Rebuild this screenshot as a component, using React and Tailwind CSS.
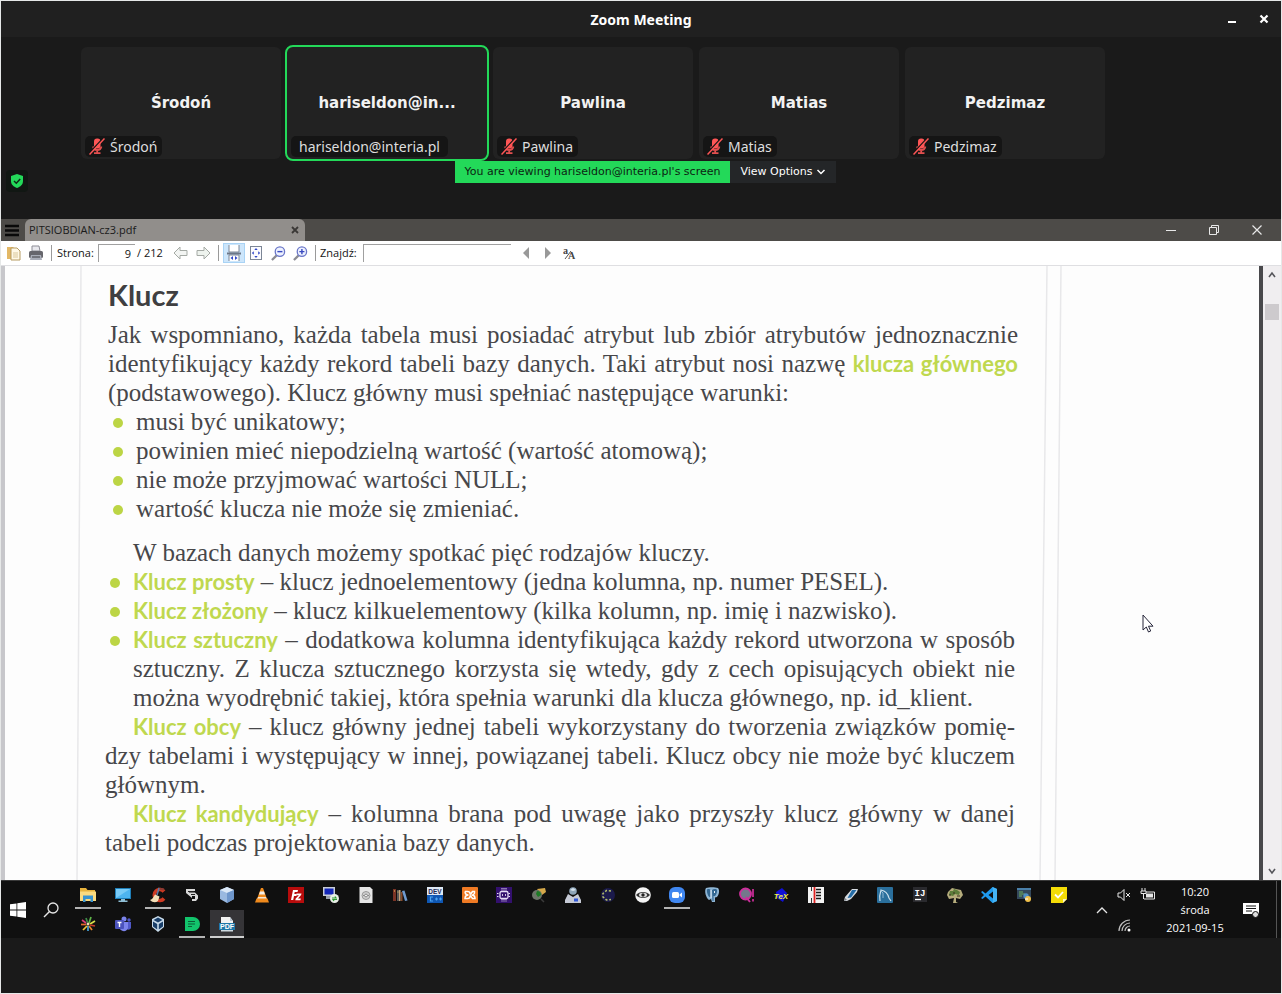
import React from "react";

const participants = [
  { name: "Środoń", label: "Środoń", muted: true },
  { name: "hariseldon@in...", label: "hariseldon@interia.pl", active: true },
  { name: "Pawlina", label: "Pawlina", muted: true },
  { name: "Matias", label: "Matias", muted: true },
  { name: "Pedzimaz", label: "Pedzimaz", muted: true },
];

function MutedMic() {
  return (
    <svg width="16" height="17" viewBox="0 0 16 17" className="shrink-0">
      <rect x="5" y="0.500" width="6.500" height="10" rx="3" fill="#ff5656" />
      <path d="M4 8.500c.5 2.500 2 3.500 4.200 3.500s3.700-1 4.200-3.500M8.200 11v4M5 15.200h6.500" stroke="#e24f4f" strokeWidth="1.800" fill="none" />
      <path d="M0 15.500L14.500 0" stroke="#151515" strokeWidth="1.600" />
      <path d="M0.500 16.500L15.500 0.500" stroke="#ff5656" strokeWidth="1.500" />
    </svg>
  );
}

function Tile({ p }) {
  return (
    <div
      className={
        "relative flex h-28 w-[200px] items-center justify-center rounded-md bg-[#222222] " +
        (p.active ? "outline-2 outline-[#23d959]" : "")
      }
    >
      <span className="text-[15px] font-bold text-[#f2f2f2]">{p.name}</span>
      <div className="absolute bottom-0.5 left-1 flex h-[21px] items-center gap-1 rounded-[5px] bg-[#151515] px-1">
        {p.muted && <MutedMic />}
        <span className={"font-['Noto_Sans',sans-serif] text-[14px] leading-5 text-[#dedede] " + (p.active ? "px-1" : "px-px")}>{p.label}</span>
      </div>
    </div>
  );
}

function Svg({ children, size = 16 }) {
  return (
    <svg width={size} height={size} viewBox="0 0 16 16">
      {children}
    </svg>
  );
}

const icons = {
  Explorer: (
    <Svg>
      <path d="M0 1h6l1.500 2H15v11H0z" fill="#e8b33c" />
      <path d="M0 4.500h16V14H0z" fill="#fbdb80" />
      <path d="M3 15V8.500h10V15h-2.500v-3h-5v3z" fill="#3a94cf" />
    </Svg>
  ),
  Computer: (
    <Svg>
      <rect x="0" y="1" width="16" height="11" fill="#1f7fb8" />
      <rect x="1" y="2" width="14" height="9" fill="#4db4f0" />
      <path d="M1 11V2h14z" fill="#79cbf7" />
      <path d="M6 12h4v1.500h2.500V15h-9v-1.500H6z" fill="#8fbfd6" />
    </Svg>
  ),
  CCleaner: (
    <Svg>
      <path d="M14 4.500A5.500 5.500 0 1 0 14 11.500" stroke="#cf3a22" strokeWidth="3.600" fill="none" />
      <path d="M8 1.500l6 1" stroke="#8c3a33" strokeWidth="2" />
      <path d="M9 1L7 8" stroke="#5a7ca8" strokeWidth="1.500" />
      <path d="M5 7.500l4.500 2L8 14c-2.500 2-5.500 1.500-8-1 2.500-.8 3.500-3 5-5.500z" fill="#f4e0b8" />
    </Svg>
  ),
  Terminal: (
    <Svg>
      <path d="M2 2h9v2H5v1.500h6l3 3v3l-2 2.500H8v-2h3V9H8v2L2 6z" fill="#d8d8d8" />
      <path d="M4 4.500h6M7 7.500h4" stroke="#222" strokeWidth="1" />
    </Svg>
  ),
  VirtualDisk: (
    <Svg>
      <path d="M8 0l7 3v9l-7 4-7-4V3z" fill="#9ab9e0" />
      <path d="M8 0l7 3-7 3-7-3z" fill="#dbe8f7" />
      <path d="M8 6l7-3v9l-7 4z" fill="#6f97cc" />
    </Svg>
  ),
  VLC: (
    <Svg>
      <path d="M7 1h2l4 11H3z" fill="#f08a1c" />
      <path d="M6 4.500h4l1 3H5z" fill="#f4f0ea" />
      <path d="M4 10h8l.7 2H3.300z" fill="#f4e6d6" />
      <path d="M2.500 11.500h11L15 15.500H1z" fill="#f08a1c" />
    </Svg>
  ),
  FileZilla: (
    <Svg>
      <rect width="16" height="16" fill="#b80c0c" />
      <path d="M3 13L5 3h5l-.5 2H6.700l-.4 2h2.500l-.4 2H6l-.8 4z" fill="#fff" />
      <path d="M8.500 6.500h5l-.4 1.600L10 11.400h2.800l-.4 1.800H7.300l.4-1.700 3.200-3.300H8.200z" fill="#fff" />
    </Svg>
  ),
  Putty: (
    <Svg>
      <rect x="0" y="0" width="12" height="9" fill="#c8cdd6" />
      <rect x="1.500" y="1.500" width="9" height="6" fill="#1326b9" />
      <path d="M3 9h7v3H3z" fill="#9aa1ad" />
      <circle cx="11.500" cy="11.500" r="4.500" fill="#e8efe6" />
      <path d="M9 11h4l-1-1.500M14 12.500h-4l1 1.500" stroke="#2c9a31" strokeWidth="1.200" fill="none" />
    </Svg>
  ),
  Disc: (
    <Svg>
      <path d="M1.500 0H12l2.500 2.500V16h-13z" fill="#e6e6e6" />
      <circle cx="8" cy="8.500" r="4" fill="#d0d0d0" stroke="#999" />
      <path d="M5 8.500h6" stroke="#888" />
      <circle cx="8" cy="8.500" r="1.400" fill="#fff" stroke="#888" />
    </Svg>
  ),
  Library: (
    <Svg>
      <path d="M1 2h3v12H1z" fill="#7a3325" />
      <path d="M5 3h2v11H5z" fill="#5b5a58" />
      <path d="M7 3h1.500v11H7z" fill="#c8a37c" />
      <path d="M9 5h1.500v9H9z" fill="#8a4a2a" />
      <path d="M10 4l2.500-.500 3 10-2.500.5z" fill="#6f9ace" />
      <path d="M2 4h1M5.500 5h1" stroke="#e6c860" />
    </Svg>
  ),
  DevCpp: (
    <Svg>
      <rect width="16" height="8" fill="#dfe9f5" />
      <rect y="8" width="16" height="8" fill="#0f57b3" />
      <text x="8" y="6.500" textAnchor="middle" fontSize="6.500" fontWeight="700" fontFamily="Liberation Sans, sans-serif" fill="#1b2a55">DEV</text>
      <path d="M6 10H3.500v4H6M8 12h3M9.500 10.500v3M12 12h3M13.500 10.500v3" stroke="#4ba4f0" strokeWidth="1.200" fill="none" />
    </Svg>
  ),
  Xampp: (
    <Svg>
      <rect width="16" height="16" rx="1" fill="#ef7a24" />
      <path d="M3 4.500h2.500Q8 4.500 8 6.500T10.500 4.500H12.500Q13 8 9.500 8M3 4.500Q3 8 6.500 8Q3 8 3 11.500H5.500Q8 11.500 8 9.500T10.500 11.500H13Q13 8 9.500 8" stroke="#fff" strokeWidth="1.500" fill="none" />
    </Svg>
  ),
  Chip: (
    <Svg>
      <rect width="16" height="16" fill="#33106e" />
      <rect x="4" y="4.500" width="8" height="7" rx="1.500" fill="none" stroke="#e6dcf7" strokeWidth="1.300" />
      <path d="M6 1v3M8 1v3M10 1v3M6 12v3M8 12v3M10 12v3M1 6.500h2.500M1 9.500h2.500M12.500 6.500H15M12.500 9.500H15" stroke="#e6dcf7" strokeDasharray="1.500 1" />
      <path d="M6 8h1M9 8h1" stroke="#fff" strokeWidth="1.600" />
    </Svg>
  ),
  Magnifier: (
    <Svg>
      <path d="M6 2l8-1 1 4-4 3z" fill="#d6a94a" />
      <circle cx="6" cy="8" r="5" fill="#6c7468" />
      <path d="M6 4a4 4 0 0 1 4 4l-3 2-2-3z" fill="#1d7a25" />
      <path d="M10 12l3 3" stroke="#3b3b3b" strokeWidth="1.500" />
    </Svg>
  ),
  Drive: (
    <Svg>
      <circle cx="8" cy="4" r="3.800" fill="#8ea5b8" />
      <path d="M3 7l5 3 5-3 3 6v3H0v-3z" fill="#c6cad6" />
      <rect x="9" y="11.500" width="4" height="3" fill="#3158d8" />
      <path d="M5 3l3-2 3 2-3 1z" fill="#d5e2ec" />
    </Svg>
  ),
  Eclipse: (
    <Svg>
      <circle cx="8" cy="8" r="7" fill="#1b1a4b" />
      <path d="M11 4L6.500 3.500 3 6.500v3.500l3.500 3 4.500-.5" stroke="#b4c06c" strokeWidth="1.600" strokeDasharray="2.200 1.800" fill="none" />
    </Svg>
  ),
  Eye: (
    <Svg>
      <circle cx="8" cy="8" r="7.800" fill="#f5f5f5" />
      <path d="M1 8c3-4 11-4 14 0-3 4-11 4-14 0z" fill="#333" />
      <ellipse cx="8" cy="8" rx="4" ry="2.200" fill="#ddd" />
      <circle cx="8" cy="8" r="1.700" fill="#222" />
    </Svg>
  ),
  Zoom: (
    <Svg>
      <rect width="16" height="16" rx="6" fill="#4087f0" />
      <rect x="3" y="5" width="7" height="6" rx="1.500" fill="#fff" />
      <path d="M10.500 7.500L13 5.500v5l-2.500-2z" fill="#fff" />
    </Svg>
  ),
  Postgres: (
    <Svg>
      <path d="M2 1c3-1 9-1 12 0 2 2 1 7-1 9l-2 .500V15H8l-1-3-2 1C2 11 0 4 2 1z" fill="#8eb5d4" />
      <path d="M3 2.500c1.500-.7 3-.5 3.500.5v7.500C4 10 2.500 5 3 2.500zM8 3c2-1.500 4.500-1 5 0 .5 2-1 5-2 6H9.500V14H8.500z" fill="#336791" />
      <path d="M7 3v8M10.500 4v2" stroke="#e8f1f8" />
    </Svg>
  ),
  Quiz: (
    <Svg>
      <circle cx="6.500" cy="7" r="5.500" fill="#74788c" stroke="#ce2e9c" strokeWidth="1.800" />
      <path d="M7 10l4 5" stroke="#ce2e9c" strokeWidth="2" />
      <path d="M14 2v8M14 12v2.500" stroke="#ce2e9c" strokeWidth="1.700" />
    </Svg>
  ),
  TeX: (
    <Svg>
      <path d="M3 5l6-4 5 5-4 9-6-4z" fill="#1010d8" />
      <text x="8" y="11.500" textAnchor="middle" fontSize="8" fontWeight="700" fontStyle="italic" fontFamily="Liberation Sans, sans-serif" fill="#f3ef4a">TeX</text>
    </Svg>
  ),
  Piano: (
    <Svg>
      <rect width="16" height="16" fill="#f3f3f3" />
      <path d="M3.500 0v4M3.500 11v5" stroke="#333" />
      <path d="M6.500 0v16" stroke="#e02222" strokeWidth="1.800" />
      <path d="M8 2.500h5M8 5.500h5M8 8.500h5M8 11.500h5" stroke="#1b1b1b" strokeWidth="1.600" />
    </Svg>
  ),
  Usb: (
    <Svg>
      <path d="M9 2h6l-1 3-6 7-4 2H1l1-4z" fill="#d8dde2" />
      <path d="M9 3h4.500L8 10.500 4.500 11z" fill="#256ca6" />
      <path d="M1 14l3-1-2-2z" fill="#7c8288" />
    </Svg>
  ),
  MySQL: (
    <Svg>
      <rect width="16" height="16" rx="1" fill="#2a6f9c" />
      <path d="M3 14c-1-5 0-8 1-11 5 1 7 4 8 8l2 3" stroke="#c9dfec" strokeWidth="1.200" fill="none" />
      <path d="M3 3l3 3v5" stroke="#8fb9d3" fill="none" />
    </Svg>
  ),
  IntelliJ: (
    <Svg>
      <rect x="1" width="14" height="15" fill="#2a2a2e" />
      <text x="8" y="9" textAnchor="middle" fontSize="9" fontWeight="700" fontFamily="Liberation Mono, monospace" fill="#fff">IJ</text>
      <path d="M3 12.500h6" stroke="#fff" strokeWidth="1.300" />
    </Svg>
  ),
  Tree: (
    <Svg>
      <path d="M1 5l4-4 4 1 5 1 2 5-3 4-4-1v4l2 1H6l1-5-5 1-2-4z" fill="#b5ac7c" />
      <path d="M3 4h3l1-2 3 1 3 2-1 3-4-1-2 2-4-1z" fill="#5d7d3b" />
      <path d="M2 8h2M10 9h3M6 6h2" stroke="#3a2f20" />
    </Svg>
  ),
  VSCode: (
    <Svg>
      <path d="M11.500 0L16 2v12l-4.500 2L4.500 9.500 1.500 12 0 11l3-3-3-3 1.500-1L4.500 6.500zM12 4.500L7.500 8l4.500 3.500z" fill="#1f9cf0" />
      <path d="M11.500 0L16 2v12l-4.500 2 .5-3V3z" fill="#45b4f5" />
    </Svg>
  ),
  PythonIde: (
    <Svg>
      <rect x="1" y="1" width="14" height="11" fill="#33485c" />
      <rect x="1" y="1" width="14" height="2" fill="#4a7fa8" />
      <path d="M3 5h4M3 7h6M3 9h3" stroke="#6fae5e" />
      <circle cx="10" cy="9" r="2.700" fill="#4f8fc4" />
      <circle cx="12" cy="12" r="3" fill="#f2c14a" />
      <path d="M9 12h3" stroke="#fff" />
    </Svg>
  ),
  Tasks: (
    <Svg>
      <path d="M0 0h16v12l-4 4H0z" fill="#f4dc06" />
      <path d="M16 12l-4 4v-4z" fill="#fff8c0" />
      <path d="M4 7.500l3 3 5-5.500" stroke="#fff" strokeWidth="1.800" fill="none" />
    </Svg>
  ),
  Burst: (
    <Svg>
      <g strokeWidth="1.700" fill="none">
        <path d="M9 7l2-6" stroke="#5fb548" />
        <path d="M10 8l5-3" stroke="#d8e04a" />
        <path d="M10 9l5 1" stroke="#c23a2c" />
        <path d="M9 10l3 4" stroke="#e6872a" />
        <path d="M8 10v5" stroke="#46a3d8" />
        <path d="M7 10l-4 4" stroke="#f0c43a" />
        <path d="M6 8.500H1" stroke="#e66a2a" />
        <path d="M6 7L2 4" stroke="#d83c78" />
        <path d="M7.500 6.500L6 2" stroke="#3d8a49" />
      </g>
      <circle cx="8" cy="8" r="1.500" fill="#f4d9b0" />
    </Svg>
  ),
  Teams: (
    <Svg>
      <circle cx="9" cy="3" r="2.500" fill="#7b83eb" />
      <circle cx="14" cy="4" r="1.700" fill="#5059c9" />
      <path d="M11 6h5v6c-1 2-3 2-4 1z" fill="#5059c9" />
      <path d="M5 6h8v6c-1 4-6 4-8 1z" fill="#7b83eb" />
      <rect x="0" y="4" width="9" height="9" rx="1" fill="#4b53bc" />
      <path d="M2.500 6.500h4M4.500 6.500v4.500" stroke="#fff" strokeWidth="1.400" />
    </Svg>
  ),
  VirtualBox: (
    <Svg>
      <path d="M8 0l6 3v8l-6 5-6-5V3z" fill="#c8dcec" />
      <path d="M8 1.500L12.500 4 8 6.500 3.500 4zM3 5.500L7.200 8v5.500L3 10.500zM13 5.500L8.800 8v5.500l4.200-3z" fill="#183e69" />
    </Svg>
  ),
  Notes: (
    <Svg>
      <path d="M1 1h8a7 7 0 0 1 0 14H1z" fill="#12c46c" />
      <path d="M4 5.500h7M4 8h7M4 10.500h4" stroke="#0b5c36" strokeWidth="1.200" />
    </Svg>
  ),
  Pdf: (
    <Svg>
      <path d="M2 1h9l3 4v4H2z" fill="#f2f2f2" />
      <path d="M11 1v4h3z" fill="#b9c3cc" />
      <rect x="0" y="7" width="16" height="7" fill="#1e77a8" />
      <text x="8" y="13" textAnchor="middle" fontSize="7" fontWeight="700" fontFamily="Liberation Sans, sans-serif" fill="#fff">PDF</text>
      <path d="M2 14h12v1.500H2z" fill="#cfd9df" />
    </Svg>
  ),
};

const taskRow1 = [
  "Explorer", "Computer", "CCleaner", "Terminal", "VirtualDisk", "VLC", "FileZilla", "Putty", "Disc", "Library",
  "DevCpp", "Xampp", "Chip", "Magnifier", "Drive", "Eclipse", "Eye", "Zoom", "Postgres", "Quiz",
  "TeX", "Piano", "Usb", "MySQL", "IntelliJ", "Tree", "VSCode", "PythonIde", "Tasks",
];
const taskRow2 = ["Burst", "Teams", "VirtualBox", "Notes", "Pdf"];
const running = ["Explorer", "CCleaner", "Zoom", "Notes"];

function TaskButton({ name }) {
  const current = name === "Pdf";
  return (
    <button
      type="button"
      aria-label={name}
      className={
        "flex h-7 flex-col items-center justify-between pt-[6px] " +
        (current ? "border-b-2 border-[#cfcfcf] bg-[#353437]" : "")
      }
    >
      {icons[name]}
      {running.includes(name) && <span className="h-0.5 w-[26px] bg-[#b4b4b4]" />}
    </button>
  );
}

function Separator() {
  return <span className="h-4 w-px bg-[#9a9a9a]" />;
}

function ToolButton({ label, active, children }) {
  return (
    <button
      type="button"
      aria-label={label}
      className={"flex h-5 w-[22px] items-center justify-center " + (active ? "border border-[#a9d3f5] bg-[#cde6fb]" : "")}
    >
      {children}
    </button>
  );
}

function ZoomGlyph({ plus }) {
  return (
    <Svg size={15}>
      <path d="M6 10L1 15" stroke="#8b8b93" strokeWidth="2.400" />
      <circle cx="9.500" cy="6" r="5" fill="#eef2ff" stroke="#6a76c8" strokeWidth="1.400" />
      <path d={plus ? "M6.800 6h5.400M9.500 3.300v5.400" : "M6.800 6h5.400"} stroke="#3949c0" strokeWidth="1.500" />
    </Svg>
  );
}

function Term({ children }) {
  return <strong className="font-[Lato,sans-serif] text-[22px] font-bold text-[#bfd84f]">{children}</strong>;
}

/* One printed line; full lines stretch to both margins. */
function Line({ full, indent, children }) {
  return (
    <span
      className={
        "block whitespace-nowrap " + (full ? "[text-align-last:justify] " : "") + (indent ? "pl-7" : "")
      }
    >
      {children}
    </span>
  );
}

function Bullet({ children }) {
  return (
    <li className="flex">
      <span className="flex h-[29px] w-7 shrink-0 items-center pt-0.5 pl-[5px]">
        <span className="size-2.5 rounded-full bg-[#bcd545]" />
      </span>
      <div className="grow">{children}</div>
    </li>
  );
}

function MeetingHeader() {
  return (
    <header className="grid h-9 grid-cols-[1fr_auto_1fr] items-center bg-[#202020] font-['Noto_Sans',sans-serif]">
      <span />
      <h1 className="text-[14px] font-bold text-white">Zoom Meeting</h1>
      <div className="flex justify-end gap-3 pr-[7px] text-white">
        <button type="button" aria-label="Minimize" className="flex size-5 items-center justify-center">
          <svg width="10" height="10" viewBox="0 0 10 10"><path d="M1 8h8" stroke="currentColor" strokeWidth="2" /></svg>
        </button>
        <button type="button" aria-label="Close" className="flex size-5 items-center justify-center">
          <svg width="10" height="10" viewBox="0 0 10 10"><path d="M1.500 1.500l7 7M8.500 1.500l-7 7" stroke="currentColor" strokeWidth="2.200" /></svg>
        </button>
      </div>
    </header>
  );
}

function Gallery() {
  return (
    <section className="h-[182px] shrink-0 pt-2.5 font-['DejaVu_Sans',sans-serif]">
      <div className="flex gap-1.5 pl-20">
        {participants.map((p) => (
          <Tile key={p.name} p={p} />
        ))}
      </div>
      <div className="flex items-start pt-0.5 pl-[5px]">
        <button type="button" aria-label="Encryption" className="mt-[9px] flex size-[22px] items-center justify-center rounded bg-[#111713]">
          <svg width="14" height="14" viewBox="0 0 14 14">
            <path d="M7 0l6 2v5c0 3.500-2.500 5.700-6 7-3.500-1.300-6-3.500-6-7V2z" fill="#23d959" />
            <path d="M4 7l2.300 2.200L10.200 5" stroke="#0f2a17" strokeWidth="1.500" fill="none" />
          </svg>
        </button>
        <div className="flex flex-1 justify-center pr-[18px] text-[11px] leading-[22px]">
          <p className="bg-[#23d959] px-2.5 text-[#0c1f12]">
            You are viewing hariseldon@interia.pl's screen
          </p>
          <button type="button" className="flex h-[22px] items-center gap-1 bg-[#242628] px-2.5 text-white">
            View Options
            <svg width="10" height="8" viewBox="0 0 10 8"><path d="M1.500 2l3.500 3.500L8.500 2" stroke="currentColor" strokeWidth="1.500" fill="none" /></svg>
          </button>
        </div>
      </div>
    </section>
  );
}

function PdfTitleBar() {
  return (
    <div className="flex h-[22px] shrink-0 items-stretch bg-[#4d4b48]">
      <button type="button" aria-label="Menu" className="flex w-6 items-center pl-1">
        <svg width="14" height="13" viewBox="0 0 14 13"><path d="M0 2h14M0 6.500h14M0 11h14" stroke="#090909" strokeWidth="2.400" /></svg>
      </button>
      <div className="flex w-[280px] items-center justify-between rounded-t-md bg-[#918e8b] pr-1.5 pl-1 text-[11px] text-[#1b1b1b]">
        <span>PITSIOBDIAN-cz3.pdf</span>
        <button type="button" aria-label="Close tab">
          <svg width="8" height="8" viewBox="0 0 8 8"><path d="M1 1l6 6M7 1L1 7" stroke="#3a3836" strokeWidth="1.800" /></svg>
        </button>
      </div>
      <div className="ml-auto flex items-center gap-[27px] pr-4 text-[#e8e8e8]">
        <button type="button" aria-label="Minimize window" className="w-4">
          <svg width="16" height="10" viewBox="0 0 16 10"><path d="M3 5.500h10" stroke="currentColor" /></svg>
        </button>
        <button type="button" aria-label="Restore window" className="w-4">
          <svg width="16" height="10" viewBox="0 0 16 10"><path d="M3.500 2.500h7v7h-7zM5.500 2.500v-2h7v7h-2" stroke="currentColor" fill="none" /></svg>
        </button>
        <button type="button" aria-label="Close window" className="w-4">
          <svg width="16" height="10" viewBox="0 0 16 10"><path d="M3.500.500l9 9M12.500.500l-9 9" stroke="currentColor" strokeWidth="1.200" /></svg>
        </button>
      </div>
    </div>
  );
}

function PdfToolbar() {
  return (
    <div className="flex h-[25px] shrink-0 items-center border-b border-[#dfdfe2] bg-white pl-0.5 text-[11px] text-[#141414]">
      <ToolButton label="Open">
        <Svg>
          <path d="M1 2h6l1 1v11H1z" fill="#e3b866" />
          <path d="M5 3h6l3 3v9H5z" fill="#fff8e6" stroke="#b59b63" />
          <path d="M7 8h5M7 10h5M7 12h5" stroke="#d9c79b" />
        </Svg>
      </ToolButton>
      <ToolButton label="Print">
        <Svg>
          <path d="M4 1h7l1 5H4z" fill="#e9e9ee" stroke="#8d8d95" />
          <rect x="1" y="6" width="14" height="7" rx="1.500" fill="#66666c" />
          <path d="M3 10h10l1 5H2z" fill="#a9adb8" />
          <path d="M4 12h8" stroke="#3c3c40" />
        </Svg>
      </ToolButton>
      <div className="flex items-center pl-1"><Separator /></div>
      <label htmlFor="page" className="w-[46px] pl-[5px]">Strona:</label>
      <input
        id="page"
        defaultValue="9"
        className="h-[18px] w-[37px] border-t border-l border-[#a0a0a0] bg-white pr-1 text-right outline-none"
      />
      <span className="w-[35px] pl-0.5 whitespace-nowrap">/ 212</span>
      <ToolButton label="Previous page">
        <Svg><path d="M1 8l6-6v3.500h7v5H7V14z" fill="#f3f5f3" stroke="#a5aaa5" /></Svg>
      </ToolButton>
      <ToolButton label="Next page">
        <Svg><path d="M15 8L9 2v3.500H2v5h7V14z" fill="#eef3ee" stroke="#a5aaa5" /></Svg>
      </ToolButton>
      <div className="flex items-center pr-1 pl-1"><Separator /></div>
      <ToolButton label="Fit width" active>
        <svg width="16" height="16" viewBox="0 0 16 16" className="shrink-0">
          <path d="M3 0v7h10V0M3 16v-6h10v6" fill="#fff" stroke="#7c8696" />
          <path d="M1 8.500h14" stroke="#6c7686" strokeWidth="2" />
          <path d="M4.500 13l2.500-2v4zM11.500 13L9 11v4z" fill="#3148c8" />
        </svg>
      </ToolButton>
      <ToolButton label="Fit page">
        <Svg>
          <rect x="2.500" y="1.500" width="11" height="13" fill="#fbfbff" stroke="#7c8696" />
          <path d="M8 3l1.700 2H6.300zM8 13l1.700-2H6.300zM3.800 8l2-1.700v3.400zM12.200 8l-2-1.700v3.400z" fill="#3148c8" />
        </Svg>
      </ToolButton>
      <ToolButton label="Zoom out"><ZoomGlyph /></ToolButton>
      <ToolButton label="Zoom in"><ZoomGlyph plus /></ToolButton>
      <div className="flex items-center pl-1"><Separator /></div>
      <label htmlFor="find" className="w-[47px] pl-1">Znajdź:</label>
      <input id="find" className="mr-1 h-[18px] w-[148px] border-t border-l border-[#a0a0a0] bg-white px-1 outline-none" />
      <ToolButton label="Find previous">
        <svg width="8" height="12" viewBox="0 0 8 12"><path d="M7 0v12L1 6z" fill="#999" /></svg>
      </ToolButton>
      <ToolButton label="Find next">
        <svg width="8" height="12" viewBox="0 0 8 12"><path d="M1 0v12l6-6z" fill="#999" /></svg>
      </ToolButton>
      <ToolButton label="Match case">
        <svg width="14" height="14" viewBox="0 0 14 14">
          <text x="0" y="8" fontSize="10" fontWeight="700" fontFamily="Liberation Serif, serif" fill="#444">a</text>
          <text x="5" y="13" fontSize="10" fontWeight="700" fontFamily="Liberation Serif, serif" fill="#444">A</text>
          <path d="M2 13l6-8" stroke="#555" />
        </svg>
      </ToolButton>
    </div>
  );
}

function Page() {
  return (
    <div className="relative flex flex-1 bg-[#fdfdfd]">
      <div className="w-1 bg-[#c7c7cb]" />
      <svg className="pointer-events-none absolute inset-y-0 left-0 h-full w-[1100px]" viewBox="0 0 1100 614" preserveAspectRatio="none">
        <path d="M80 0L76 614M1046 0L1039 614M1060 0L1054 614" stroke="#e8e8ea" strokeWidth="1.500" fill="none" />
      </svg>
      <article className="relative grow pt-3 font-['Liberation_Serif',serif] text-[25px] leading-[29px] text-[#47474a]">
        <div className="ml-[103px] w-[910px]">
          <h2 className="mb-2 font-[Lato,sans-serif] text-[29px] leading-[34px] font-bold text-[#3f3f41]">Klucz</h2>
          <p>
            <Line full>Jak wspomniano, każda tabela musi posiadać atrybut lub zbiór atrybutów jednoznacznie</Line>
            <Line full>identyfikujący każdy rekord tabeli bazy danych. Taki atrybut nosi nazwę <Term>klucza głównego</Term></Line>
            <Line>(podstawowego). Klucz główny musi spełniać następujące warunki:</Line>
          </p>
          <ul>
            <Bullet>musi być unikatowy;</Bullet>
            <Bullet>powinien mieć niepodzielną wartość (wartość atomową);</Bullet>
            <Bullet>nie może przyjmować wartości NULL;</Bullet>
            <Bullet>wartość klucza nie może się zmieniać.</Bullet>
          </ul>
        </div>
        <div className="ml-[100px] w-[910px] pt-[15px]">
          <p><Line indent>W bazach danych możemy spotkać pięć rodzajów kluczy.</Line></p>
          <ul>
            <Bullet><Term>Klucz prosty</Term> – klucz jednoelementowy (jedna kolumna, np. numer PESEL).</Bullet>
            <Bullet><Term>Klucz złożony</Term> – klucz kilkuelementowy (kilka kolumn, np. imię i nazwisko).</Bullet>
            <Bullet>
              <Line full><Term>Klucz sztuczny</Term> – dodatkowa kolumna identyfikująca każdy rekord utworzona w sposób</Line>
              <Line full>sztuczny. Z klucza sztucznego korzysta się wtedy, gdy z cech opisujących obiekt nie</Line>
              <Line>można wyodrębnić takiej, która spełnia warunki dla klucza głównego, np. id_klient.</Line>
            </Bullet>
          </ul>
          <p>
            <Line full indent><Term>Klucz obcy</Term> – klucz główny jednej tabeli wykorzystany do tworzenia związków pomię-</Line>
            <Line full>dzy tabelami i występujący w innej, powiązanej tabeli. Klucz obcy nie może być kluczem</Line>
            <Line>głównym.</Line>
          </p>
          <p>
            <Line full indent><Term>Klucz kandydujący</Term> – kolumna brana pod uwagę jako przyszły klucz główny w danej</Line>
            <Line>tabeli podczas projektowania bazy danych.</Line>
          </p>
        </div>
      </article>
      <div className="w-1 bg-[#48484b]" />
      <div className="flex w-[18px] flex-col items-center bg-[#f0eef0] py-1 text-[#55555a]">
        <svg width="10" height="10" viewBox="0 0 10 10"><path d="M2 7l3-4 3 4" stroke="currentColor" strokeWidth="1.600" fill="none" /></svg>
        <div className="mt-6 h-4 w-3.5 bg-[#cdcacd]" />
        <svg className="mt-auto" width="10" height="10" viewBox="0 0 10 10"><path d="M2 3l3 4 3-4" stroke="currentColor" strokeWidth="1.600" fill="none" /></svg>
      </div>
      <svg className="absolute top-[348px] left-[1141px]" width="12" height="20" viewBox="0 0 12 20">
        <path d="M1 1v15l3.300-3 2.200 5 2.200-1-2.200-4.800H11z" fill="#fff" stroke="#26263a" />
      </svg>
    </div>
  );
}

function Taskbar() {
  return (
    <nav className="flex h-[58px] shrink-0 items-stretch border-t border-[#3a3a3a] bg-[#101010] text-white">
      <button type="button" aria-label="Start" className="flex w-[34px] items-center justify-center">
        <Svg>
          <path d="M0 2.300L6.500 1.400v6.200H0zM7.300 1.300L16 0v7.600H7.300zM0 8.400h6.500v6.200L0 13.700zM7.300 8.400H16V16l-8.700-1.300z" fill="#fff" />
        </Svg>
      </button>
      <button type="button" aria-label="Search" className="flex w-9 items-center justify-center pr-1">
        <Svg>
          <circle cx="10" cy="6" r="5" stroke="#e6e6e6" strokeWidth="1.300" fill="none" />
          <path d="M6.500 9.500L1 15" stroke="#e6e6e6" strokeWidth="1.500" />
        </Svg>
      </button>
      <div className="grid flex-1 grid-cols-[repeat(29,minmax(0,1fr))] content-start gap-y-px">
        {taskRow1.map((name) => <TaskButton key={name} name={name} />)}
        {taskRow2.map((name) => <TaskButton key={name} name={name} />)}
      </div>
      <div className="flex w-[205px] items-center pl-4">
        <button type="button" aria-label="Show hidden icons" className="flex w-5 shrink-0 justify-center">
          <svg width="12" height="8" viewBox="0 0 12 8"><path d="M1 7l5-5 5 5" stroke="#e6e6e6" strokeWidth="1.300" fill="none" /></svg>
        </button>
        <div className="grid w-12 shrink-0 grid-cols-2 justify-items-center gap-y-3.5">
          <Svg>
            <path d="M2 6h2.500L8 2.500v11L4.500 10H2z" stroke="#e6e6e6" fill="none" />
            <path d="M10 6l4 4M14 6l-4 4" stroke="#e6e6e6" />
          </Svg>
          <Svg>
            <path d="M2 1v3M5 1v3M1 4h5v2.500H1zM3.500 6.500V12" stroke="#e6e6e6" fill="none" />
            <path d="M6 5h8.500v7H4" stroke="#e6e6e6" fill="none" />
            <rect x="6" y="6.500" width="7" height="4" fill="#e6e6e6" />
          </Svg>
          <Svg>
            <path d="M3 14A11 11 0 0 1 14 3M6 14a8 8 0 0 1 8-8M9 14a5 5 0 0 1 5-5" stroke="#bdbdbd" strokeWidth="1.200" fill="none" />
            <circle cx="13" cy="13" r="1.500" fill="#fff" />
          </Svg>
        </div>
        <div className="flex w-[70px] shrink-0 flex-col items-center text-[11px] leading-[18px]">
          <span>10:20</span>
          <span>środa</span>
          <span className="whitespace-nowrap">2021-09-15</span>
        </div>
        <button type="button" aria-label="Notifications" className="flex h-full flex-1 items-center justify-center pr-1">
          <Svg>
            <path d="M0 1h16v11h-4v3l-3-3H0z" fill="#fff" />
            <path d="M3 4h10M3 6.500h10M3 9h6" stroke="#151515" />
            <circle cx="12.500" cy="12.500" r="3" fill="#ddd" stroke="#101010" />
          </Svg>
        </button>
        <span className="mr-1 h-full w-px bg-[#555]" />
      </div>
    </nav>
  );
}

export default function App() {
  return (
    <div className="flex min-h-screen flex-col border border-[#e6e8e8] bg-[#1a1a1a]">
      <MeetingHeader />
      <Gallery />
      <main className="flex flex-1 flex-col font-['Open_Sans',sans-serif]">
        <PdfTitleBar />
        <PdfToolbar />
        <Page />
        <Taskbar />
      </main>
      <footer className="h-[55px]" />
    </div>
  );
}
